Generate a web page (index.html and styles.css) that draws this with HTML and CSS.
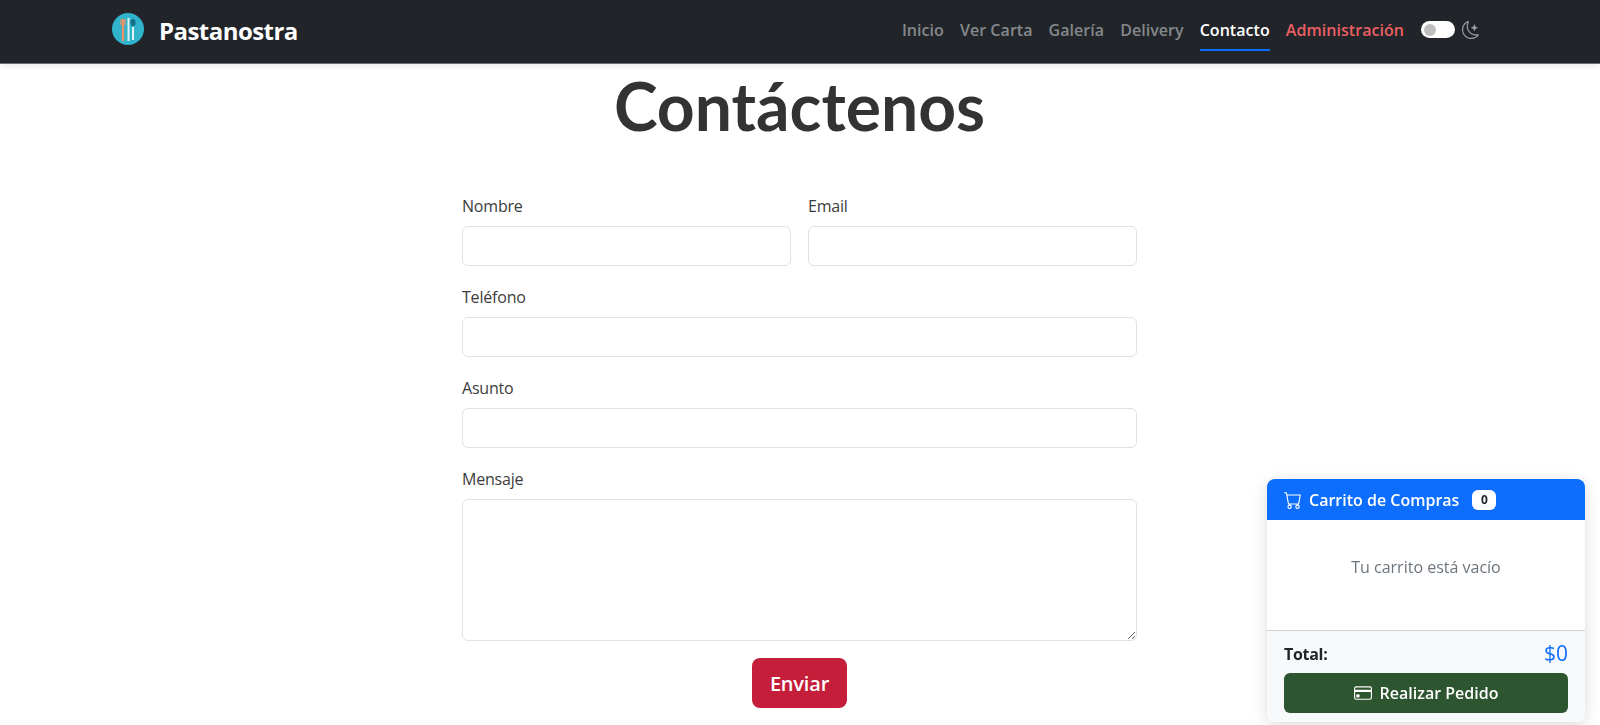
FILE: index.html
```html
<!DOCTYPE html>
<html lang="es">
<head>
  <meta charset="UTF-8">
  <meta name="viewport" content="width=device-width, initial-scale=1.0">
  <title>Contacto | Pastanostra</title>
  <link rel="stylesheet" href="styles.css">
</head>
<body>
  <nav class="navbar">
    <div class="nav-inner">
      <a class="brand" href="#">
        <svg class="brand-logo" viewBox="0 0 32 32" width="32" height="32">
          <circle cx="16" cy="16" r="16" fill="#2fb4cb"/>
          <path d="M11 6v22" stroke="#e8926c" stroke-width="2.4"/>
          <path d="M9 6v6M13 6v6" stroke="#e8926c" stroke-width="1.2"/>
          <path d="M16.500 5v23" stroke="#dff3f5" stroke-width="2"/>
          <path d="M21 14v13" stroke="#dff3f5" stroke-width="2"/>
          <ellipse cx="21" cy="9.500" rx="2.600" ry="3.600" fill="#14708a"/>
        </svg>
        <span>Pastanostra</span>
      </a>
      <ul class="nav-links">
        <li><a href="#">Inicio</a></li>
        <li><a href="#">Ver Carta</a></li>
        <li><a href="#">Galería</a></li>
        <li><a href="#">Delivery</a></li>
        <li><a class="active" href="#">Contacto</a></li>
        <li><a class="admin" href="#">Administración</a></li>
      </ul>
      <div class="theme-toggle">
        <span class="switch"><span class="knob"></span></span>
        <svg viewBox="0 0 16 16" width="18" height="18" fill="#9a9da1">
          <path d="M6 .278a.768.768 0 0 1 .08.858 7.208 7.208 0 0 0-.878 3.460c0 4.021 3.278 7.277 7.318 7.277.527 0 1.040-.055 1.533-.16a.787.787 0 0 1 .810.316.733.733 0 0 1-.031.893A8.349 8.349 0 0 1 8.344 16C3.734 16 0 12.286 0 7.710 0 4.266 2.114 1.312 5.124.060A.752.752 0 0 1 6 .278zM4.858 1.311A7.269 7.269 0 0 0 1.025 7.710c0 4.020 3.279 7.276 7.319 7.276a7.316 7.316 0 0 0 5.205-2.162c-.337.042-.680.063-1.029.063-4.610 0-8.343-3.714-8.343-8.290 0-1.167.242-2.278.681-3.286z"/>
          <path d="M10.794 3.148a.217.217 0 0 1 .412 0l.387 1.162c.173.518.579.924 1.097 1.097l1.162.387a.217.217 0 0 1 0 .412l-1.162.387a1.734 1.734 0 0 0-1.097 1.097l-.387 1.162a.217.217 0 0 1-.412 0l-.387-1.162A1.734 1.734 0 0 0 9.310 6.593l-1.162-.387a.217.217 0 0 1 0-.412l1.162-.387a1.734 1.734 0 0 0 1.097-1.097l.387-1.162z"/>
        </svg>
      </div>
    </div>
  </nav>

  <main class="contact">
    <h1>Contáctenos</h1>
    <form class="contact-form">
      <div class="form-row">
        <div class="field">
          <label for="nombre">Nombre</label>
          <input id="nombre" type="text">
        </div>
        <div class="field">
          <label for="email">Email</label>
          <input id="email" type="email">
        </div>
      </div>
      <div class="field">
        <label for="telefono">Teléfono</label>
        <input id="telefono" type="text">
      </div>
      <div class="field">
        <label for="asunto">Asunto</label>
        <input id="asunto" type="text">
      </div>
      <div class="field">
        <label for="mensaje">Mensaje</label>
        <textarea id="mensaje"></textarea>
      </div>
      <button class="btn-send" type="button">Enviar</button>
    </form>
  </main>

  <aside class="cart">
    <div class="cart-header">
      <svg viewBox="0 0 16 16" width="18" height="18" fill="#fff">
        <path d="M0 1.500A.5.5 0 0 1 .5 1H2a.5.5 0 0 1 .485.379L2.890 3H14.500a.5.5 0 0 1 .491.592l-1.500 8A.5.5 0 0 1 13 12H4a.5.5 0 0 1-.491-.408L2.010 3.607 1.610 2H.5a.5.5 0 0 1-.5-.5zM3.102 4l1.313 7h8.170l1.313-7H3.102zM5 12a2 2 0 1 0 0 4 2 2 0 0 0 0-4zm7 0a2 2 0 1 0 0 4 2 2 0 0 0 0-4zm-7 1a1 1 0 1 1 0 2 1 1 0 0 1 0-2zm7 0a1 1 0 1 1 0 2 1 1 0 0 1 0-2z"/>
      </svg>
      <span class="cart-title">Carrito de Compras</span>
      <span class="cart-badge">0</span>
    </div>
    <div class="cart-body">Tu carrito está vacío</div>
    <div class="cart-footer">
      <div class="cart-total">
        <span class="total-label">Total:</span>
        <span class="total-value">$0</span>
      </div>
      <button class="btn-order" type="button">
        <svg viewBox="0 0 16 16" width="18" height="18" fill="#fff">
          <path d="M0 4a2 2 0 0 1 2-2h12a2 2 0 0 1 2 2v8a2 2 0 0 1-2 2H2a2 2 0 0 1-2-2V4zm2-1a1 1 0 0 0-1 1v1h14V4a1 1 0 0 0-1-1H2zm13 4H1v5a1 1 0 0 0 1 1h12a1 1 0 0 0 1-1V7z"/>
          <path d="M2 10a1 1 0 0 1 1-1h1a1 1 0 0 1 1 1v1a1 1 0 0 1-1 1H3a1 1 0 0 1-1-1v-1z"/>
        </svg>
        Realizar Pedido
      </button>
    </div>
  </aside>
</body>
</html>
```

FILE: styles.css
```css
* {
  box-sizing: border-box;
}
html, body {
  height: 725px;
  overflow: hidden;
}
body {
  margin: 0;
  font-family: 'Open Sans', 'Noto Sans', sans-serif;
  font-size: 16px;
  line-height: 1.5;
  color: #333;
  background: #fff;
}
.navbar {
  height: 64px;
  background: #212529;
  border-bottom: 1px solid #6c7075;
  box-shadow: 0 2px 6px rgba(0, 0, 0, 0.08);
}
.nav-inner {
  height: 63px;
  padding: 0 120px 0 112px;
  display: flex;
  align-items: center;
}
.brand {
  display: flex;
  align-items: center;
  gap: 15px;
  color: #fff;
  text-decoration: none;
  font-size: 24px;
  font-weight: 700;
  letter-spacing: -0.55px;
  line-height: 34px;
  margin-bottom: 2px;
}
.brand-logo {
  margin-top: -4px;
}
.nav-links {
  list-style: none;
  display: flex;
  gap: 16px;
  margin: 0 17px 0 auto;
  padding: 0;
  font-size: 16px;
  font-weight: 600;
  letter-spacing: 0.05px;
}
.nav-links a {
  display: block;
  color: #85888c;
  text-decoration: none;
  padding: 6px 0 7px;
  border-bottom: 2px solid transparent;
}
.nav-links a.active {
  color: #fff;
  border-bottom-color: #0d6efd;
}
.nav-links a.admin {
  color: #ea5f63;
}
.theme-toggle {
  display: flex;
  align-items: center;
  gap: 7px;
  margin-top: -4px;
}
.switch {
  display: flex;
  align-items: center;
  width: 34px;
  height: 17px;
  padding-left: 3px;
  border-radius: 9px;
  background: #fff;
}
.knob {
  width: 12px;
  height: 12px;
  border-radius: 50%;
  background: #bfbfbf;
}
.contact {
  width: 675px;
  margin-left: 462px;
}
.contact h1 {
  margin: 0;
  padding-top: 4px;
  text-align: center;
  font-family: 'Lato', 'Open Sans', sans-serif;
  font-size: 66px;
  font-weight: 700;
  line-height: 76px;
  color: #333;
}
.contact-form {
  display: flex;
  flex-direction: column;
  gap: 19px;
  margin-top: 50px;
}
.form-row {
  display: flex;
  gap: 17px;
}
.form-row .field {
  flex: 1;
}
.field label {
  display: block;
  height: 24px;
  margin-bottom: 8px;
  letter-spacing: -0.2px;
  color: #3c3c3c;
}
.field input, .field textarea {
  display: block;
  width: 100%;
  background: #fff;
  border: 1px solid #dee2e6;
  border-radius: 6px;
  outline: none;
}
.field input {
  height: 40px;
}
.field textarea {
  height: 142px;
  resize: vertical;
}
.btn-send {
  align-self: center;
  width: 95px;
  height: 50px;
  margin-top: -2px;
  border: 0;
  border-radius: 8px;
  background: #c41e3a;
  color: #fff;
  font-family: inherit;
  font-size: 20px;
  font-weight: 600;
  letter-spacing: -0.2px;
}
.cart {
  position: fixed;
  right: 15px;
  bottom: 3px;
  width: 318px;
  height: 243px;
  display: flex;
  flex-direction: column;
  border-radius: 8px;
  overflow: hidden;
  background: #fff;
  box-shadow: 0 4px 16px rgba(0, 0, 0, 0.14);
}
.cart-header {
  height: 41px;
  display: flex;
  align-items: center;
  padding: 0 16px 0 17px;
  background: #0d6efd;
  color: #fff;
  font-weight: 600;
}
.cart-title {
  margin-left: 7px;
}
.cart-badge {
  margin-left: 13px;
  width: 24px;
  height: 20px;
  border-radius: 6px;
  background: #fff;
  color: #212529;
  font-size: 12px;
  font-weight: 700;
  line-height: 20px;
  text-align: center;
}
.cart-body {
  flex: 1;
  display: flex;
  align-items: center;
  justify-content: center;
  padding-bottom: 16px;
  font-size: 16px;
  color: #6c757d;
}
.cart-footer {
  height: 92px;
  padding: 7px 17px 0;
  background: #f8f9fa;
  border-top: 1px solid #d3d5d7;
}
.cart-total {
  display: flex;
  justify-content: space-between;
  align-items: center;
  height: 32px;
}
.total-label {
  font-weight: 700;
  letter-spacing: -0.3px;
  color: #212529;
}
.total-value {
  font-size: 21px;
  font-weight: 500;
  color: #0d6efd;
}
.btn-order {
  display: flex;
  align-items: center;
  justify-content: center;
  gap: 8px;
  width: 100%;
  height: 40px;
  margin-top: 3px;
  border: 0;
  border-radius: 6px;
  background: #2d5530;
  color: #fff;
  font-family: inherit;
  font-size: 16px;
  font-weight: 600;
}
```
